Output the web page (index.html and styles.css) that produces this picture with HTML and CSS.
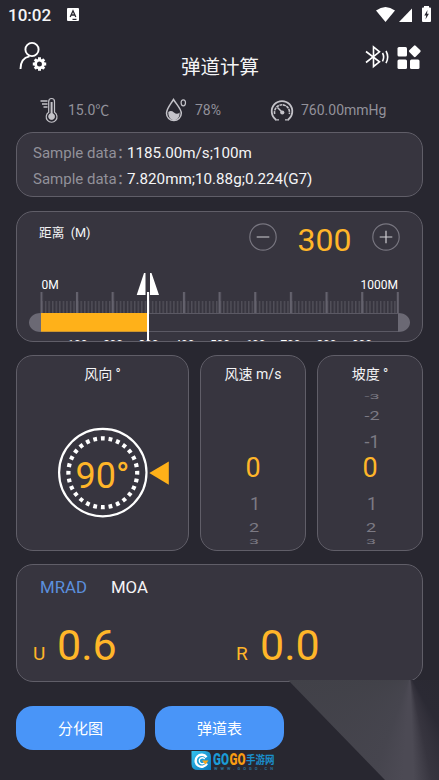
FILE: index.html
```html
<!DOCTYPE html>
<html lang="zh-CN">
<head>
<meta charset="utf-8">
<meta name="viewport" content="width=device-width, initial-scale=1">
<title>弹道计算</title>
<link rel="stylesheet" href="styles.css">
</head>
<body>
<div class="screen">
  <div class="statusbar">
    <span class="clock">10:02</span>
    <svg class="kbd" width="12" height="13" viewBox="0 0 12 13"><rect width="12" height="13" rx="1" fill="#fff"/><path d="M3.2 9 6 2.8 8.8 9M4.3 7h3.4M5.500 11.300h4" fill="none" stroke="#282730" stroke-width="1.3"/></svg>
    <svg class="signals" width="56" height="18" viewBox="375 5 56 18" fill="#fff"><path d="M376 10.500Q385.500 3.500 395 10.500L385.500 22Z"/><path d="M399 22 412 8.500V22Z"/><path d="M422 8.500Q422 7.500 423 7.500H424V6h5V7.500H430Q431 7.500 431 8.500V21Q431 22 430 22H423Q422 22 422 21Z"/><path d="M427.500 10 424.300 15.500H426.200L425.500 19.500 428.900 13.800H427Z" fill="#282730"/></svg>
  </div>

  <header class="topbar">
    <svg class="user" width="28" height="30" viewBox="19 41 28 30" fill="none" stroke="#fff" stroke-width="1.900"><circle cx="32" cy="49.500" r="6.600"/><path d="M20.500 69C20.500 62 24 57.500 29.500 56.400"/><circle cx="39.500" cy="64" r="3.900" stroke-width="2.800"/><g stroke-width="3"><path d="M39.500 57.300v2.500M39.500 68.200v2.500M32.800 64h2.500M43.700 64h2.500M34.800 59.300l1.700 1.700M42.500 67l1.700 1.700M34.800 68.700l1.700-1.700M42.500 61l1.700-1.700"/></g></svg>
    <h1 class="title">弹道计算</h1>
    <svg class="actions" width="57" height="26" viewBox="365 44 57 26"><g fill="none" stroke="#fff" stroke-width="1.600"><path d="M366 51.500 379.500 61.800 373.500 66.500V47L379.500 51.800 366 62.500"/><path d="M382.500 53Q384.800 57 382.500 61.300M386 51Q389.400 57 386 63.200"/></g><g fill="#fff"><rect x="397.500" y="47" width="9.500" height="9.500" rx="1.500"/><rect x="397.500" y="59.500" width="9.500" height="9.500" rx="1.500"/><rect x="410" y="59.500" width="9.500" height="9.500" rx="1.500"/><rect x="410.300" y="46.700" width="9" height="9" rx="1.200" transform="rotate(45 414.800 51.200)"/></g></svg>
  </header>

  <div class="weather">
    <div class="reading temp">
      <svg width="18" height="26" viewBox="40 97 18 26" fill="none" stroke="#c4c3c9"><path d="M48.700 112.300V101.500Q48.700 98.500 51.600 98.500T54.500 101.500V112.300A5.400 5.400 0 1 1 48.700 112.300Z" stroke-width="1.200"/><circle cx="51.600" cy="116.500" r="2.900" fill="#c4c3c9"/><path d="M51.600 102V115" stroke-width="2"/><path d="M40.500 101h7M42 104h5.500M43.500 107h4" stroke-width="1.300"/></svg>
      <span>15.0℃</span>
    </div>
    <div class="reading humid">
      <svg width="23" height="24" viewBox="165 98 23 24" fill="none" stroke="#c4c3c9"><path d="M173.500 99.500C170 105 166.500 109 166.500 113.200A7.400 7.400 0 0 0 181.300 113.200C181.300 109 177 105 173.500 99.500Z" stroke-width="1.500"/><path d="M168.300 112Q171 110 174 112.500T179.600 112.500C180 123 168 122.500 168.300 112Z" fill="#c4c3c9" stroke="none"/><ellipse cx="183.300" cy="102.800" rx="2.200" ry="3" stroke-width="1.200"/></svg>
      <span>78%</span>
    </div>
    <div class="reading press">
      <svg width="24" height="23" viewBox="270 98 24 23" fill="none" stroke="#c4c3c9"><path d="M276 118.700A10.300 10.300 0 1 1 288 118.700" stroke-width="1.800"/><path d="M274.700 113A7.500 7.500 0 1 1 289.300 113" stroke-width="1.600" stroke-dasharray="3 .6"/><path d="M277.500 106.500 282.500 111.500" stroke-width="1.500"/><circle cx="282.300" cy="111.500" r="2.100" fill="#c4c3c9" stroke="none"/><path d="M275 118.800h4M285 118.800h4" stroke-width="1.300"/></svg>
      <span>760.00mmHg</span>
    </div>
  </div>

  <section class="card sample">
    <div class="line"><span class="label">Sample data：</span><span class="value">1185.00m/s;100m</span></div>
    <div class="line"><span class="label">Sample data：</span><span class="value">7.820mm;10.88g;0.224(G7)</span></div>
  </section>

  <section class="card distance">
    <div class="dist-head">
      <span class="dist-label">距离&nbsp; (M)</span>
      <svg class="minus" width="28" height="28" viewBox="0 0 28 28" fill="none"><circle cx="14" cy="14" r="13.200" stroke="#77757f" stroke-width="1.200"/><path d="M7.700 14h12.600" stroke="#d0cfd4" stroke-width="1.200"/></svg>
      <span class="dist-value">300</span>
      <svg class="plus" width="28" height="28" viewBox="0 0 28 28" fill="none"><circle cx="14" cy="14" r="13.200" stroke="#77757f" stroke-width="1.200"/><path d="M7.700 14h12.600M14 7.700v12.600" stroke="#d0cfd4" stroke-width="1.200"/></svg>
    </div>
    <svg class="ruler" width="404" height="71" viewBox="17 271 404 71">
      <defs>
        <pattern id="minor" x="41.300" y="0" width="3.565" height="400" patternUnits="userSpaceOnUse"><rect width="1.400" height="400" fill="#514f59"/></pattern>
        <pattern id="major" x="40.300" y="0" width="35.650" height="400" patternUnits="userSpaceOnUse"><rect width="2.200" height="400" fill="#64626d"/></pattern>
      </defs>
      <g class="ends"><text x="41.500" y="289">0M</text><text x="398" y="289" text-anchor="end">1000M</text></g>
      <rect x="41" y="301" width="357" height="12" fill="url(#minor)"/>
      <rect x="40.300" y="292" width="358.800" height="21" fill="url(#major)"/>
      <path d="M41 313V332C25 332 25 313 41 313ZM398 313V332C414 332 414 313 398 313Z" fill="#6b6974"/>
      <path d="M41 313.500H398M41 331.500H398" stroke="#5b5964"/>
      <rect x="41" y="313" width="107" height="18.700" fill="#ffb119"/>
      <g class="marks" text-anchor="middle"><text x="77.500" y="348.600">100</text><text x="113" y="348.600">200</text><text x="148.500" y="348.600">300</text><text x="184.500" y="348.600">400</text><text x="220" y="348.600">500</text><text x="255.500" y="348.600">600</text><text x="290.500" y="348.600">700</text><text x="326.500" y="348.600">800</text><text x="362" y="348.600">900</text></g>
      <path d="M144 273H145.500V295H136.700ZM150 273H151.500L159 295H150Z" fill="#fff"/>
      <path d="M148 292V342" stroke="#fff" stroke-width="2"/>
    </svg>
  </section>

  <div class="dials">
    <section class="card wind">
      <h2>风向 °</h2>
      <svg width="112" height="92" viewBox="57 427 112 92"><circle cx="102.800" cy="472.600" r="43.700" fill="none" stroke="#fff" stroke-width="2.200"/><circle cx="102.800" cy="472.800" r="34.400" fill="none" stroke="#fff" stroke-width="4.200" pathLength="480" stroke-dasharray="8.500 8.643" stroke-dashoffset="4.250"/><path d="M149.300 473 168.800 461.500V484.800Z" fill="#ffb119"/><text class="angle" x="75.500" y="488">90°</text></svg>
    </section>
    <section class="card speed">
      <h2>风速 m/s</h2>
      <div class="wheel">
        <span class="now">0</span>
        <span class="n1">1</span>
        <span class="n2">2</span>
        <span class="n3">3</span>
      </div>
    </section>
    <section class="card slope">
      <h2>坡度 °</h2>
      <div class="wheel">
        <span class="m3">-3</span>
        <span class="m2">-2</span>
        <span class="m1">-1</span>
        <span class="now">0</span>
        <span class="n1">1</span>
        <span class="n2">2</span>
        <span class="n3">3</span>
      </div>
    </section>
  </div>

  <section class="card result">
    <div class="units"><span class="active">MRAD</span><span>MOA</span></div>
    <div class="values"><span class="axis">U</span><span class="num up">0.6</span><span class="axis r">R</span><span class="num">0.0</span></div>
  </section>

  <div class="buttons">
    <button>分化图</button>
    <button>弹道表</button>
  </div>

  <div class="beam"></div>
  <svg class="badge" width="114" height="24" viewBox="162 749 114 24">
    <defs><linearGradient id="logo" x2="1" y2="1"><stop stop-color="#35c4ef"/><stop offset="1" stop-color="#0876bb"/></linearGradient></defs>
    <path d="M191.500 751H205Q211 751 211 757V770H198Q191.500 770 191.500 764Z" fill="url(#logo)"/>
    <path d="M206.500 757.200A6 6 0 1 0 207 763.500" fill="none" stroke="#fff" stroke-width="2.400"/><path d="M204.700 759A3 3 0 1 0 204.700 762.500" fill="none" stroke="#fff" stroke-width="1.300"/><path d="M202 760.500h6.500l-3 4Z" fill="#f7a51c"/>
    <g class="brand"><text x="213" y="765" textLength="16" lengthAdjust="spacingAndGlyphs" fill="#1b9bd6">GO</text><text x="229.500" y="765" textLength="16" lengthAdjust="spacingAndGlyphs" fill="#f99d12">GO</text></g>
    <text class="brand-cn" x="246" y="763.500" textLength="28.500" lengthAdjust="spacingAndGlyphs">手游网</text>
    <text class="brand-url" x="214" y="769.800" textLength="59">WWW.GOGO.CN</text>
  </svg>
</div>
</body>
</html>
```
FILE: styles.css
```css
* { box-sizing: border-box; }
body { margin: 0; background: #282730; color: #f4f4f6; font-family: Roboto, "Noto Sans CJK SC", sans-serif; }
svg { display: block; flex: none; }
.screen { position: relative; width: 439px; height: 780px; overflow: hidden; padding: 0 16px; }
.statusbar { display: flex; height: 30px; margin: 0 -8px; }
.clock { width: 59px; font-size: 17px; font-weight: 500; line-height: 31px; }
.kbd { margin-top: 8px; }
.signals { margin: 5px 0 0 auto; }
.topbar { display: flex; height: 67px; padding: 11px 1px 0 3px; }
.title { margin: 12px 0 0 134px; font-size: 19.5px; font-weight: 400; line-height: 30px; white-space: nowrap; }
.actions { margin: 3px 0 0 auto; }
.weather { display: flex; height: 35px; margin-left: -16px; font-size: 14px; color: #92919a; }
.reading { display: flex; align-items: center; height: 26px; }
.reading span { line-height: 20px; white-space: nowrap; }
.temp { width: 125px; padding-left: 40px; gap: 10px; }
.humid { width: 145px; padding-left: 40px; gap: 7px; }
.press { gap: 7px; }
.card { width: 407px; border: 1px solid #605e68; border-radius: 17px; background: #37353f; }
.sample { height: 65px; padding: 6px 16px; font-size: 15.2px; }
.line { display: flex; height: 26px; line-height: 28px; white-space: nowrap; }
.label { width: 94px; font-size: 15px; color: #92919a; }
.distance { height: 131px; margin-top: 14px; overflow: hidden; }
.dist-head { display: flex; height: 59px; padding-left: 22px; }
.dist-label { width: 210px; font-size: 12.700px; line-height: 20px; padding-top: 11px; }
.minus, .plus { margin-top: 11px; }
.dist-value { width: 95px; text-align: center; font-size: 32px; line-height: 57px; color: #ffb629; }
.ends, .marks { font-size: 12px; fill: #fff; }
.dials { display: flex; gap: 11px; height: 196px; margin-top: 13px; }
.dials .card { height: 196px; }
.dials .wind { width: 173px; }
.dials .speed, .dials .slope { width: 106px; }
h2 { margin: 0; padding-top: 7px; font-size: 14px; font-weight: 400; line-height: 22px; text-align: center; }
.wind svg { margin: 42px 0 0 40px; }
.angle { font-size: 36px; fill: #ffb629; }
.wheel { display: grid; grid-template-rows: 14px 24px 28px 24px 10px 28px 18px 10px; justify-items: center; align-items: center; padding-top: 5px; color: #7c7a84; font-size: 18px; line-height: 18px; }
.now { grid-row: 4; font-size: 27px; line-height: 24px; color: #ffb629; }
.m3 { grid-row: 1; transform: scaleY(.35); margin-left: 4px; }
.m2 { grid-row: 2; transform: scaleY(.7); margin-left: 4px; }
.m1 { grid-row: 3; margin-left: 4px; }
.n1 { grid-row: 6; margin-left: 4px; }
.n2 { grid-row: 7; transform: scaleY(.75); margin-left: 2px; }
.n3 { grid-row: 8; transform: scaleY(.45); margin-left: 2px; }
.result { height: 118px; margin-top: 13px; padding-top: 10px; }
.units { display: flex; gap: 24px; padding-left: 23px; font-size: 16.8px; line-height: 24px; }
.active { color: #5b8fdd; }
.values { display: flex; align-items: baseline; padding-left: 16px; margin-top: 20px; color: #ffb629; line-height: 52px; }
.axis { width: 24px; font-size: 19px; }
.num { font-size: 43px; }
.up { width: 179px; }
.buttons { display: flex; gap: 10px; margin-top: 24px; }
button { width: 129px; height: 44px; padding: 0 0 2px; border: 0; border-radius: 17px; background: #4995f8; color: #fff; font: 15px Roboto, "Noto Sans CJK SC", sans-serif; }
.beam { position: absolute; left: 288px; top: 680px; width: 151px; height: 100px; background: conic-gradient(at 122px -4px, #2a2932 90deg, #2b2a34 150deg, #37353f 168deg, #4c4a54 178deg, #4c4a54 184deg, #46454e 200deg, #414148 270deg); clip-path: polygon(0 0, 100% 0, 100% 100%, 97px 100%); }
.badge { position: absolute; left: 162px; top: 749px; }
.brand { font-size: 17px; font-weight: 900; }
.brand-cn { font: 700 11px "Noto Sans CJK SC", sans-serif; fill: #1b8fcb; }
.brand-url { font-size: 4px; font-weight: 700; fill: #2b6f96; }
```
